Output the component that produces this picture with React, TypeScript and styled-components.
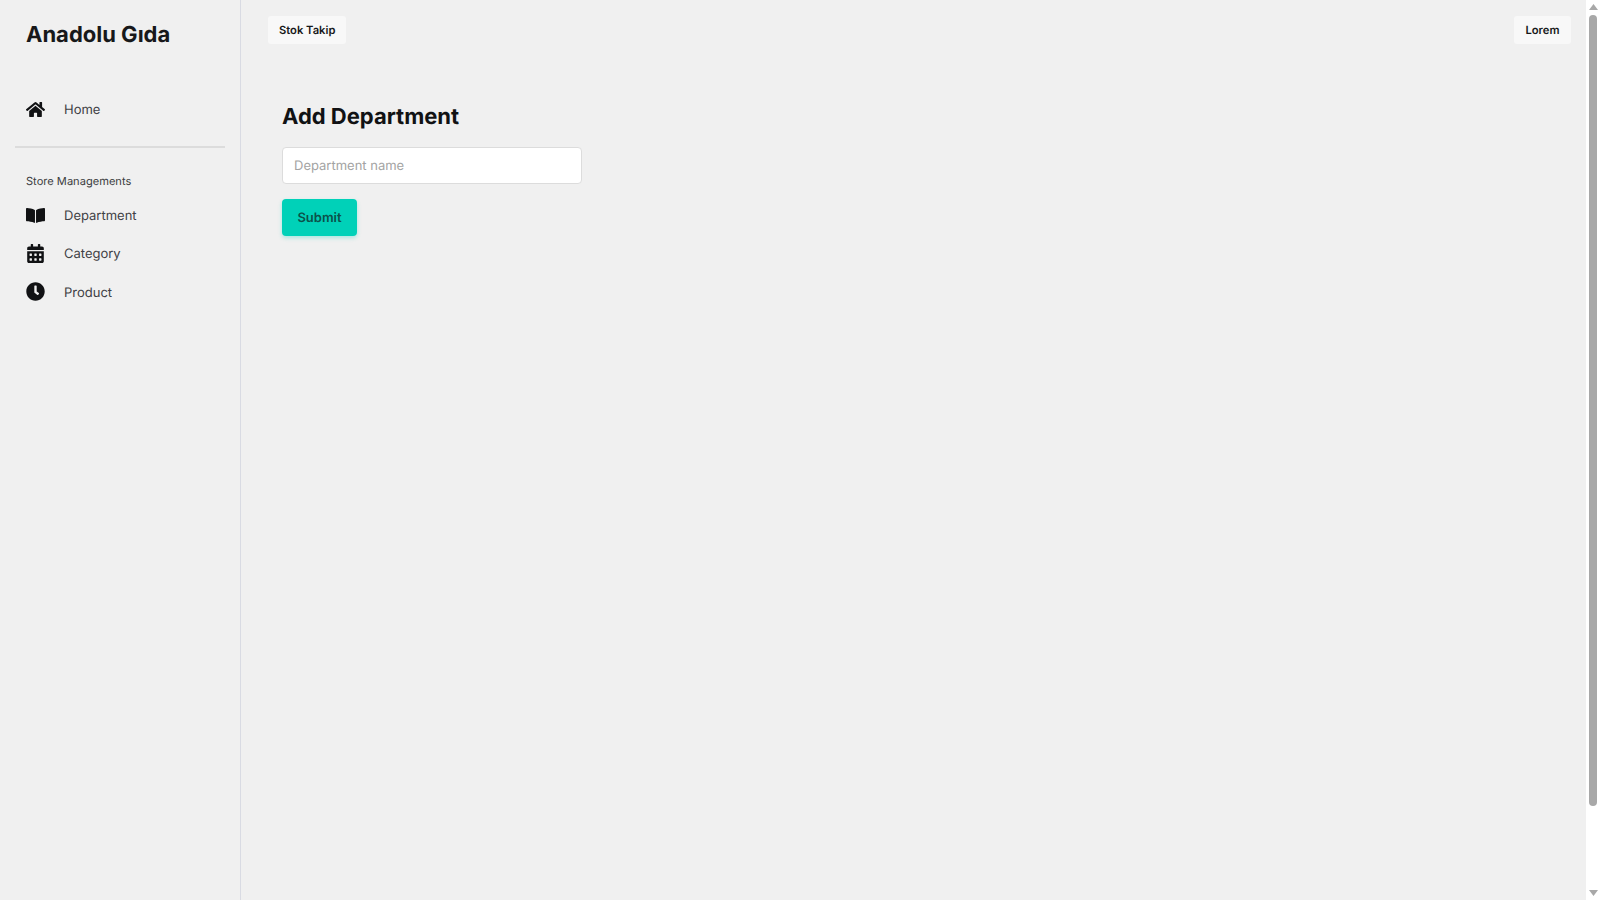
import React, { FC } from 'react';
import styled, { createGlobalStyle } from 'styled-components';
import { FaBookOpen, FaCalendarAlt, FaClock, FaHome } from 'react-icons/fa';

const GlobalStyle = createGlobalStyle`
  body {
    margin: 0;
    background: #f0f0f0;
    font-family: Inter, 'Liberation Sans', sans-serif;
    color: #111214;
    text-rendering: geometricPrecision;
  }

  input,
  button {
    text-rendering: geometricPrecision;
  }
`;

const Screen = styled.div`
  display: flex;
  height: 100vh;
  overflow: hidden;
`;

const Sidebar = styled.aside`
  flex: 0 0 241px;
  box-sizing: border-box;
  border-right: 1px solid #d9dbe3;
  padding: 0 15px;
`;

const Brand = styled.h1`
  margin: 0;
  padding: 21px 11px 0;
  height: 90px;
  box-sizing: border-box;
  font-size: 22px;
  line-height: 28px;
  font-weight: 700;
  color: #17181a;
`;

const Divider = styled.hr`
  margin: 18px 0 0;
  border: 0;
  height: 2px;
  background: #dcdcdc;
`;

const SectionLabel = styled.div`
  margin: 25px 11px 7px;
  font-size: 11.1px;
  line-height: 16px;
  color: #3c3e42;
`;

const NavItem = styled.a`
  display: flex;
  align-items: center;
  height: 38.2px;
  padding-left: 11px;
  font-size: 13px;
  color: #3f4145;

  svg {
    flex: none;
    margin-right: 19px;
    color: #111214;
  }
`;

const NavLabel = styled.span`
  padding-top: 2px;
`;

const Main = styled.main`
  flex: 1;
  min-width: 0;
  box-sizing: border-box;
  padding: 16px 15.5px 0 27px;
`;

const TopBar = styled.header`
  display: flex;
  justify-content: space-between;
`;

const Tag = styled.div`
  height: 28px;
  padding: 0 11px;
  display: flex;
  align-items: center;
  background: #f8f8f8;
  border-radius: 3px;
  font-size: 11.2px;
  font-weight: 600;
  color: #17181a;
`;

const FormSection = styled.section`
  padding: 57px 14px 0;
`;

const Title = styled.h2`
  margin: 0 0 14px;
  font-size: 22px;
  line-height: 32px;
  font-weight: 700;
  color: #111214;
`;

const TextInput = styled.input`
  display: block;
  box-sizing: border-box;
  width: 300px;
  height: 37px;
  padding: 0 11px;
  background: #ffffff;
  border: 1px solid #dcdcdc;
  border-radius: 4px;
  font: 400 13px Inter, 'Liberation Sans', sans-serif;

  &::placeholder {
    color: #a3a3a3;
    opacity: 1;
  }
`;

const SubmitButton = styled.button`
  display: block;
  margin-top: 15px;
  width: 75px;
  height: 37px;
  padding: 0;
  border: 0;
  border-radius: 4px;
  background: #00d1b8;
  box-shadow: 0 2px 4px rgba(0, 209, 184, 0.3);
  font: 600 13px Inter, 'Liberation Sans', sans-serif;
  color: #0b524a;
`;

const ScrollRail = styled.div`
  flex: 0 0 14px;
  box-sizing: border-box;
  padding: 4px 2px 4px 3px;
  display: flex;
  flex-direction: column;
  justify-content: space-between;
  background: #ffffff;
`;

const ScrollThumb = styled.div`
  width: 8px;
  height: 791px;
  margin-bottom: 79px;
  background: #a8a8a8;
  border-radius: 4px;
`;

const ScrollArrow = styled.svg`
  display: block;
  width: 9px;
  height: 6px;
  fill: #a8a8a8;
`;

const storeLinks = [
  { label: 'Department', Icon: FaBookOpen },
  { label: 'Category', Icon: FaCalendarAlt },
  { label: 'Product', Icon: FaClock },
];

const App: FC = () => (
  <>
    <GlobalStyle />
    <Screen>
      <Sidebar>
        <Brand>Anadolu Gıda</Brand>
        <NavItem>
          <FaHome size={19} />
          <NavLabel>Home</NavLabel>
        </NavItem>
        <Divider />
        <SectionLabel>Store Managements</SectionLabel>
        {storeLinks.map(({ label, Icon }) => (
          <NavItem key={label}>
            <Icon size={19} />
            <NavLabel>{label}</NavLabel>
          </NavItem>
        ))}
      </Sidebar>
      <Main>
        <TopBar>
          <Tag>Stok Takip</Tag>
          <Tag>Lorem</Tag>
        </TopBar>
        <FormSection>
          <Title>Add Department</Title>
          <TextInput placeholder="Department name" />
          <SubmitButton>Submit</SubmitButton>
        </FormSection>
      </Main>
      <ScrollRail>
        <ScrollArrow viewBox="0 0 9 6">
          <path d="M4.5 0 9 6H0z" />
        </ScrollArrow>
        <ScrollThumb />
        <ScrollArrow viewBox="0 0 9 6">
          <path d="M0 0h9L4.5 6z" />
        </ScrollArrow>
      </ScrollRail>
    </Screen>
  </>
);

export default App;
